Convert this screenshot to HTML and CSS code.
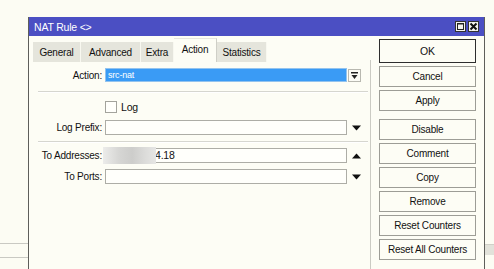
FILE: index.html
```html
<!DOCTYPE html>
<html lang="en">
<head>
    <meta charset="UTF-8">
    <title>NAT Rule</title>
    <link rel="stylesheet" href="styles.css">
</head>
<body>
    <div class="desk">
        <div class="side-left">
            <div class="bg-line first"></div>
            <div class="bg-line"></div>
        </div>

        <div class="window">
            <div class="titlebar">
                <span class="title">NAT Rule &lt;&gt;</span>
                <div class="tb-buttons">
                    <div class="tb-btn">
                        <svg width="9" height="9" viewBox="0 0 9 9"><rect x="1.5" y="1.5" width="6" height="6" fill="none" stroke="#222" stroke-width="1"/><line x1="1" y1="2" x2="8" y2="2" stroke="#222" stroke-width="1"/></svg>
                    </div>
                    <div class="tb-btn">
                        <svg width="9" height="9" viewBox="0 0 9 9"><path d="M1.5 1.5 L7.5 7.5 M7.5 1.5 L1.5 7.5" stroke="#111" stroke-width="2"/></svg>
                    </div>
                </div>
            </div>

            <div class="win-body">
                <div class="main">
                    <div class="tabs">
                        <div class="tab tab-general">General</div>
                        <div class="tab tab-advanced">Advanced</div>
                        <div class="tab tab-extra">Extra</div>
                        <div class="tab tab-action active">Action</div>
                        <div class="tab tab-stats">Statistics</div>
                    </div>

                    <div class="row row-action">
                        <label class="lbl">Action:</label>
                        <div class="field selected">src-nat</div>
                        <div class="drop-box">
                            <svg width="9" height="9" viewBox="0 0 9 9"><rect x="1" y="1" width="7" height="1.5" fill="#222"/><path d="M1.5 4 L7.5 4 L4.5 8 Z" fill="#222"/></svg>
                        </div>
                    </div>

                    <div class="sep sep-first"></div>

                    <div class="row row-check">
                        <div class="check"></div>
                        <span class="check-text">Log</span>
                    </div>

                    <div class="row row-prefix">
                        <label class="lbl">Log Prefix:</label>
                        <div class="field"></div>
                        <div class="arrow">
                            <svg width="9" height="6" viewBox="0 0 9 6"><path d="M0 0.5 L9 0.5 L4.5 5.5 Z" fill="#111"/></svg>
                        </div>
                    </div>

                    <div class="sep sep-second"></div>

                    <div class="row row-addr">
                        <label class="lbl">To Addresses:</label>
                        <div class="field addr">
                            <span class="blur"></span>4.18
                        </div>
                        <div class="arrow">
                            <svg width="9" height="6" viewBox="0 0 9 6"><path d="M0 5.5 L9 5.5 L4.5 0.5 Z" fill="#111"/></svg>
                        </div>
                    </div>

                    <div class="row row-ports">
                        <label class="lbl">To Ports:</label>
                        <div class="field"></div>
                        <div class="arrow">
                            <svg width="9" height="6" viewBox="0 0 9 6"><path d="M0 0.5 L9 0.5 L4.5 5.5 Z" fill="#111"/></svg>
                        </div>
                    </div>
                </div>

                <div class="vsep"></div>

                <div class="buttons">
                    <div class="btn default">OK</div>
                    <div class="btn">Cancel</div>
                    <div class="btn">Apply</div>
                    <div class="btn btn-disable">Disable</div>
                    <div class="btn">Comment</div>
                    <div class="btn">Copy</div>
                    <div class="btn">Remove</div>
                    <div class="btn">Reset Counters</div>
                    <div class="btn">Reset All Counters</div>
                </div>
            </div>
        </div>

        <div class="side-right">
            <div class="bg-band"></div>
        </div>
    </div>
</body>
</html>
```

FILE: styles.css
```css
body {
    margin: 0;
    padding: 0;
    background-color: #fcfcf3;
    font-family: "Liberation Sans", Arial, sans-serif;
    font-size: 10px;
    letter-spacing: -0.2px;
    color: #111;
}

.desk {
    display: flex;
    height: 269px;
    overflow: hidden;
}

/* bits of the app behind the dialog */
.side-left {
    width: 28px;
    flex-shrink: 0;
}
.bg-line {
    height: 1px;
    background-color: #c9c9c2;
    margin-top: 13px;
}
.bg-line.first {
    margin-top: 243px;
}
.side-right {
    flex: 1;
}
.bg-band {
    margin-top: 244px;
    height: 10px;
    background-color: #e2e2da;
    border-top: 1px solid #d0d0c8;
}

/* dialog */
.window {
    width: 457px;
    flex-shrink: 0;
    box-sizing: border-box;
    margin-top: 17px;
    border-left: 1px solid #5e5e5a;
    border-right: 1px solid #5e5e5a;
    background-color: #fdfdf5;
}

.titlebar {
    height: 19px;
    background-color: #4b4fc3;
    color: #fff;
    display: flex;
    align-items: center;
    justify-content: space-between;
    padding: 0 5px 0 5px;
    font-size: 10.5px;
}
.tb-buttons {
    display: flex;
    gap: 2px;
}
.tb-btn {
    width: 11px;
    height: 11px;
    box-sizing: border-box;
    background-color: #f4f4ee;
    border: 1px solid #333;
    display: flex;
    align-items: center;
    justify-content: center;
}

.win-body {
    display: flex;
}

.main {
    width: 341px;
}

/* tabs */
.tabs {
    display: flex;
    align-items: flex-end;
    height: 24px;
    margin-top: 2px;
    padding-left: 4px;
}
.tab {
    height: 20px;
    box-sizing: border-box;
    background-color: #e5e5dc;
    border-right: 1px solid #f8f8f0;
    display: flex;
    align-items: center;
    justify-content: center;
    padding-top: 1px;
}
.tab-general { width: 48px; }
.tab-advanced { width: 60px; }
.tab-extra { width: 33px; }
.tab-action { width: 43px; }
.tab-stats { width: 50px; }
.tab.active {
    height: 24px;
    background-color: #fdfdf5;
    border-top: 1px solid #e6e6de;
    border-right: 1px solid #cfcfc7;
    padding-top: 0;
    padding-bottom: 3px;
}

/* form rows */
.row {
    display: flex;
    align-items: center;
}
.lbl {
    width: 73px;
    text-align: right;
    margin-right: 3px;
    white-space: nowrap;
}
.field {
    width: 242px;
    height: 15px;
    box-sizing: border-box;
    background-color: #fffffb;
    border: 1px solid #adada6;
    padding-left: 3px;
    line-height: 13px;
    position: relative;
}
.field.selected {
    height: 14px;
    background-color: #3a9bf5;
    border-color: #93c3ee;
    color: #fff;
    font-size: 9px;
    line-height: 12px;
    padding-left: 2px;
}
.field.addr {
    padding-left: 49px;
    font-size: 10.5px;
}
.blur {
    position: absolute;
    left: -3px;
    top: -2px;
    width: 53px;
    height: 17px;
    background: linear-gradient(90deg, #ececea 0%, #d6d6d4 30%, #cdcdcb 55%, #dcdcda 80%, #e6e6e4 100%);
}
.drop-box {
    width: 13px;
    height: 13px;
    box-sizing: border-box;
    margin-left: 1px;
    border: 1px solid #b8b8b0;
    background-color: #fbfbf5;
    display: flex;
    align-items: center;
    justify-content: center;
}
.arrow {
    width: 18px;
    display: flex;
    justify-content: center;
}

.row-action { margin-top: 6px; }
.row-check { margin-top: 8px; padding-left: 76px; }
.row-prefix { margin-top: 7px; }
.row-addr { margin-top: 5px; }
.row-ports { margin-top: 6px; }

.check {
    width: 12px;
    height: 12px;
    box-sizing: border-box;
    border: 1px solid #a3a39c;
    background-color: #fffffb;
}
.check-text {
    margin-left: 4px;
    font-size: 10.5px;
}

.sep {
    margin-left: 9px;
    width: 330px;
    height: 1px;
    background-color: #d6d6cf;
    border-bottom: 1px solid #ffffff;
}
.sep-first { margin-top: 9px; }
.sep-second { margin-top: 6px; }

.vsep {
    width: 1px;
    height: 240px;
    margin-top: 24px;
    background-color: #cbcbc3;
}

/* button column */
.buttons {
    width: 97px;
    margin-left: 8px;
    padding-top: 3px;
    display: flex;
    flex-direction: column;
    gap: 3px;
}
.btn {
    height: 21px;
    box-sizing: border-box;
    border: 1px solid #9d9d96;
    background-color: #fdfdf5;
    display: flex;
    align-items: center;
    justify-content: center;
    font-size: 10px;
}
.btn.default {
    height: 24px;
    border: 1px solid #2e2e2e;
    font-size: 10.5px;
}
.btn-disable {
    margin-top: 5px;
}
```
